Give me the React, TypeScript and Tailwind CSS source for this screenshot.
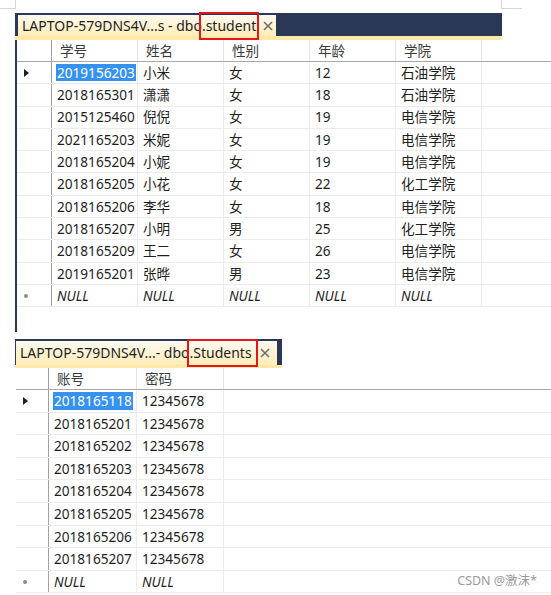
const FONT = { fontFamily: '"Noto Sans", "Noto Sans CJK SC", sans-serif' }

const students = [
  ["2019156203", "小米", "女", "12", "石油学院"],
  ["2018165301", "潇潇", "女", "18", "石油学院"],
  ["2015125460", "倪倪", "女", "19", "电信学院"],
  ["2021165203", "米妮", "女", "19", "电信学院"],
  ["2018165204", "小妮", "女", "19", "电信学院"],
  ["2018165205", "小花", "女", "22", "化工学院"],
  ["2018165206", "李华", "女", "18", "电信学院"],
  ["2018165207", "小明", "男", "25", "化工学院"],
  ["2018165209", "王二", "女", "26", "电信学院"],
  ["2019165201", "张晔", "男", "23", "电信学院"],
]

const accounts = [
  "2018165118",
  "2018165201",
  "2018165202",
  "2018165203",
  "2018165204",
  "2018165205",
  "2018165206",
  "2018165207",
]

function CloseIcon() {
  return (
    <svg width="10" height="10" viewBox="0 0 10 10" className="shrink-0">
      <path d="M1 1L9 9M9 1L1 9" stroke="#6e6e6e" strokeWidth="1.6" />
    </svg>
  )
}

function Tab({
  prefix,
  name,
  height,
  box,
  gap,
  padR,
}: {
  prefix: string
  name: string
  height: string
  box: string
  gap: string
  padR: string
}) {
  return (
    <div
      className={`${height} ${gap} ${padR} flex items-center pl-[4px] bg-gradient-to-b from-[#fffaf0] to-[#ffedb8] text-[14px] text-[#1e1e1e] leading-none`}
    >
      <span className="whitespace-nowrap">
        {prefix}
        <span className="relative">
          {name}
          <span className={`absolute -top-[4px] -bottom-[5px] border-2 border-[#e3161e] ${box}`} />
        </span>
      </span>
      <CloseIcon />
    </div>
  )
}

function RowMark({ kind }: { kind: "current" | "new" | "none" }) {
  if (kind === "current")
    return (
      <svg width="5" height="8" viewBox="0 0 5 8">
        <path d="M0 0L5 4L0 8Z" fill="#1e1e1e" />
      </svg>
    )
  if (kind === "new") return <span className="w-[4px] h-[4px] rounded-full bg-[#8a8a8a]" />
  return null
}

function Grid({
  headers,
  rows,
  markW,
  colW,
  headH,
  rowH,
}: {
  headers: string[]
  rows: string[][]
  markW: string
  colW: string[]
  headH: string
  rowH: string
}) {
  const all = [...rows, headers.map(() => "NULL")]
  return (
    <div className="flex flex-col text-[13.6px] leading-none">
      <div className={`flex ${headH} border-b border-[#a8a8a8]`}>
        <div className={`${markW} shrink-0 border-r border-[#a0a0a0]`} />
        {headers.map((h, i) => (
          <div key={h} className={`${colW[i]} shrink-0 flex items-center pl-[8px] border-r border-[#e4e4e4] text-[#3a3a3a]`}>
            {h}
          </div>
        ))}
      </div>
      {all.map((r, ri) => {
        const isNull = ri === rows.length
        return (
          <div key={ri} className={`flex ${rowH} border-b border-[#ececec]`}>
            <div className={`${markW} shrink-0 flex items-center pl-[7px] border-r border-[#a0a0a0]`}>
              <RowMark kind={ri === 0 ? "current" : isNull ? "new" : "none"} />
            </div>
            {r.map((c, ci) => (
              <div
                key={ci}
                className={`${colW[ci]} shrink-0 flex items-center pl-[4px] border-r border-[#ececec] text-[#1e1e1e] ${isNull ? "italic" : ""}`}
              >
                {ri === 0 && ci === 0 ? (
                  <span className="bg-[#3592f0] text-white px-[1px] py-[2px]">{c}</span>
                ) : (
                  <span className="px-[1px]">{c}</span>
                )}
              </div>
            ))}
          </div>
        )
      })}
    </div>
  )
}

export default function App() {
  return (
    <div className="w-[551px] h-[595px] bg-white overflow-hidden" style={FONT}>
      <div className="h-[13px] flex">
        <div className="w-[16px] h-[9px] border-r border-b border-[#d4d4d4]" />
        <div className="w-[485px]" />
        <div className="w-[21px] h-[9px] border-l border-b border-[#d4d4d4]" />
      </div>

      <div className="ml-[15px] w-[487px] bg-[#293955] pt-[2px]">
        <div className="pl-[3px] flex">
          <Tab
            prefix="LAPTOP-579DNS4V...s - dbo"
            name=".student"
            height="h-[21px]"
            box="-left-[3px] -right-[3px]"
            gap="gap-[7px]"
            padR="pr-[3px]"
          />
        </div>
        <div className="h-[4px] bg-[#ffe8a6]" />
      </div>
      <div className="ml-[15px] h-[292px] border-l-2 border-[#293955]">
        <Grid
          headers={["学号", "姓名", "性别", "年龄", "学院"]}
          rows={students}
          markW="w-[35px]"
          colW={["w-[86px]", "w-[86px]", "w-[86px]", "w-[86px]", "w-[86px]"]}
          headH="h-[22px]"
          rowH="h-[22.3px]"
        />
      </div>

      <div className="h-[7px]" />

      <div className="ml-[15px] w-[267px] bg-[#293955] pt-[2px]">
        <div className="pl-[1px] flex">
          <Tab
            prefix="LAPTOP-579DNS4V...- dbo"
            name=".Students"
            height="h-[24px]"
            box="-left-[3px] -right-[6px]"
            gap="gap-[8px]"
            padR="pr-[7px]"
          />
        </div>
        <div className="h-[3px] bg-[#ffe8a6]" />
      </div>
      <div className="ml-[16px] relative">
        <Grid
          headers={["账号", "密码"]}
          rows={accounts.map((a) => [a, "12345678"])}
          markW="w-[33px]"
          colW={["w-[88px]", "w-[87px]"]}
          headH="h-[22px]"
          rowH="h-[22.6px]"
        />
        <span className="absolute right-[14px] top-[207px] text-[12.5px] text-[#9a9a9a] leading-none">CSDN @激沫*</span>
      </div>
    </div>
  )
}
